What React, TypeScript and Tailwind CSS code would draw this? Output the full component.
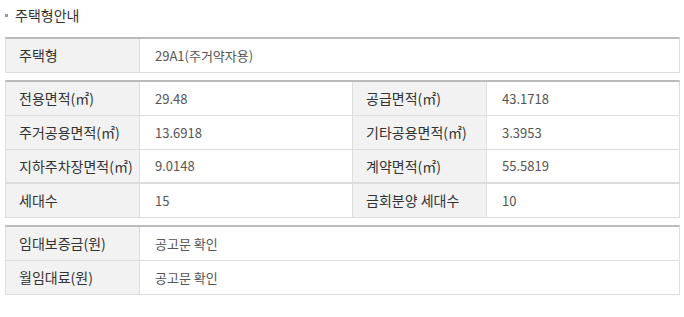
const font = { fontFamily: '"Noto Sans CJK KR", "Noto Sans", sans-serif' };

type Cell = { label: string; value: string };

function Row({ cells, thick }: { cells: Cell[]; thick?: boolean }) {
  return (
    <div
      className={`grid grid-cols-[134px_213px_134px_1fr] h-[34px] border-[#ddd] ${thick ? "border-b-2" : "border-b"}`}
    >
      {cells.map((c, i) => (
        <Pair key={i} cell={c} wide={cells.length === 1} />
      ))}
    </div>
  );
}

function Pair({ cell, wide }: { cell: Cell; wide: boolean }) {
  return (
    <>
      <div className="flex items-center bg-[#f2f2f2] border-r border-[#ddd] pl-[13px] text-[14px] text-[#333]">
        {cell.label}
      </div>
      <div
        className={`flex items-center pl-[15px] text-[13px] text-[#555] ${wide ? "col-span-3" : "border-r border-[#ddd] last:border-r-0"}`}
      >
        {cell.value}
      </div>
    </>
  );
}

function Table({ children }: { children: React.ReactNode }) {
  return (
    <div className="border-t-2 border-t-[#bbb] border-x border-x-[#ddd]">{children}</div>
  );
}

export default function App() {
  return (
    <div className="bg-white w-[684px] h-[317px] px-[5px]" style={font}>
      <div className="flex items-center h-[30px] gap-[7px]">
        <span className="w-[3px] h-[3px] bg-[#999]" />
        <h2 className="text-[14px] text-[#333]">주택형안내</h2>
      </div>
      <div className="w-[675px] mt-[7px] flex flex-col gap-[7px]">
        <Table>
          <Row cells={[{ label: "주택형", value: "29A1(주거약자용)" }]} />
        </Table>
        <Table>
          <Row
            cells={[
              { label: "전용면적(㎡)", value: "29.48" },
              { label: "공급면적(㎡)", value: "43.1718" },
            ]}
          />
          <Row
            cells={[
              { label: "주거공용면적(㎡)", value: "13.6918" },
              { label: "기타공용면적(㎡)", value: "3.3953" },
            ]}
          />
          <Row
            thick
            cells={[
              { label: "지하주차장면적(㎡)", value: "9.0148" },
              { label: "계약면적(㎡)", value: "55.5819" },
            ]}
          />
          <Row
            cells={[
              { label: "세대수", value: "15" },
              { label: "금회분양 세대수", value: "10" },
            ]}
          />
        </Table>
        <Table>
          <Row cells={[{ label: "임대보증금(원)", value: "공고문 확인" }]} />
          <Row cells={[{ label: "월임대료(원)", value: "공고문 확인" }]} />
        </Table>
      </div>
    </div>
  );
}
